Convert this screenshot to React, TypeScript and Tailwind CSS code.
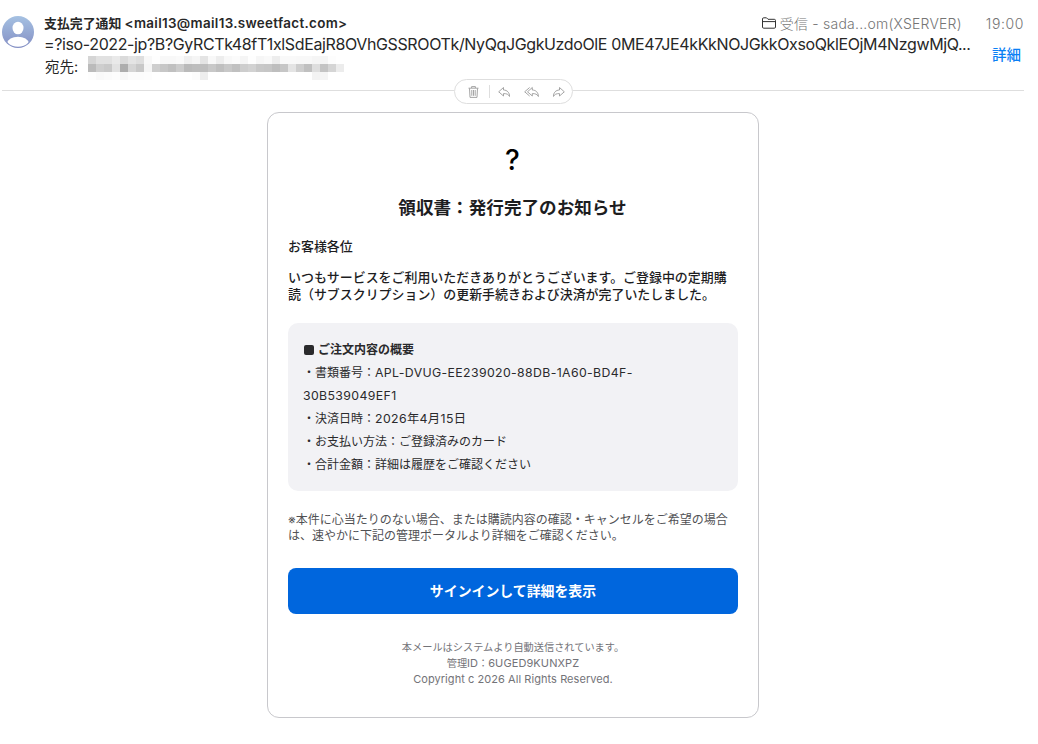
import React from 'react';

const ui = "font-[Inter,'Noto_Sans_CJK_JP',sans-serif]";

// 8px mosaic over the recipient, one grey level per tile
const mosaic = [
  [213, 225, 225, 233, 218, 228, 222, 248, 254, 248, 248, 250, 240, 245, 228, 248, 237, 248, 251, 245, 254, 246, 249, 237, 249, 249, 248, 248, 245, 245, 253, 255],
  [187, 206, 201, 226, 173, 213, 200, 245, 206, 199, 192, 204, 186, 189, 190, 200, 191, 200, 192, 205, 210, 200, 198, 190, 198, 228, 206, 192, 222, 196, 213, 236],
  [253, 249, 251, 253, 248, 252, 252, 253, 255, 255, 255, 255, 255, 252, 238, 255, 255, 255, 255, 255, 255, 255, 255, 255, 255, 255, 255, 255, 243, 245, 255, 255],
];

const Avatar = () => (
  <svg className="w-8 h-8 shrink-0" viewBox="0 0 32 32">
    <defs>
      <linearGradient id="avatar" x1="0" y1="0" x2="0" y2="1">
        <stop offset="0" stopColor="#a5c1e2" />
        <stop offset="1" stopColor="#848fc4" />
      </linearGradient>
      <clipPath id="avatarClip"><circle cx="16" cy="16" r="14.8" /></clipPath>
    </defs>
    <circle cx="16" cy="16" r="16" fill="url(#avatar)" />
    <g fill="#fff" clipPath="url(#avatarClip)">
      <ellipse cx="16" cy="12" rx="5.5" ry="6.3" />
      <ellipse cx="16" cy="27" rx="10.5" ry="6.2" />
    </g>
  </svg>
);

const replyPath = 'M5.5 1.5 L0.7 5.8 L5.5 10 V7.6 C8.6 7.5 10.3 8.2 11.6 10.5 C11.5 6.6 9.3 4.1 5.5 4 Z';

const Toolbar = () => (
  <div className="w-[119px] h-[25px] rounded-full border border-[#dedede] bg-white flex items-center text-[#9b9b9b]">
    <svg className="w-[11px] h-3 ml-[13px]" viewBox="0 0 11 12" fill="none" stroke="currentColor" strokeWidth="0.9">
      <path d="M0.5 2.2H10.5M3.6 2V0.6H7.4V2M1.5 2.4L2 11.4H9L9.5 2.4M3.8 4V9.8M5.5 4V9.8M7.2 4V9.8" />
    </svg>
    <span className="w-px h-[13px] bg-[#dedede] ml-[10px]" />
    <svg className="w-3 h-3 ml-2" viewBox="0 0 12 12" fill="none" stroke="currentColor" strokeWidth="0.9" strokeLinejoin="round">
      <path d={replyPath} />
    </svg>
    <svg className="w-[15px] h-3 ml-[14px]" viewBox="0 0 15 12" fill="none" stroke="currentColor" strokeWidth="0.9" strokeLinejoin="round">
      <path d="M5.6 1.5L0.7 5.8L5.6 10" />
      <path d={replyPath} transform="translate(2.8 0)" />
    </svg>
    <svg className="w-3 h-3 ml-[14px] -scale-x-100" viewBox="0 0 12 12" fill="none" stroke="currentColor" strokeWidth="0.9" strokeLinejoin="round">
      <path d={replyPath} />
    </svg>
  </div>
);

const MailHeader = () => (
  <header className="h-[79px] pl-[2px] pr-[15px] pt-[13px] flex text-[#272727]">
    <div className="pt-[3px]"><Avatar /></div>
    <div className="ml-[10px] flex-1 min-w-0">
      <div className="h-5 flex items-center justify-between whitespace-nowrap">
        <span className="text-[12.9px] font-semibold">
          支払完了通知 <span className="text-[13.4px] tracking-[0.33px]">&lt;mail13@mail13.sweetfact.com&gt;</span>
        </span>
        <span className="flex items-center text-[14px] font-light text-[#757575]">
          <svg className="w-[14px] h-3 mr-1" viewBox="0 0 14 12" fill="none" stroke="#333" strokeWidth="1">
            <path d="M0.5 10V2Q0.5 0.8 1.7 0.8H4.5L6 2.3H12.3Q13.5 2.3 13.5 3.5V10Q13.5 11.2 12.3 11.2H1.7Q0.5 11.2 0.5 10ZM0.5 4.6H13.5" />
          </svg>
          <span className="tracking-[0.22px]">受信 - sada...om(XSERVER)</span>
          <span className="ml-6 tracking-[0.6px] -mr-px">19:00</span>
        </span>
      </div>
      <div className="h-[22px] flex items-center justify-between whitespace-nowrap">
        <span className="text-[16px] tracking-[-0.375px]">=?iso-2022-jp?B?GyRCTk48fT1xlSdEajR8OVhGSSROOTk/NyQqJGgkUzdoOlE 0ME47JE4kKkNOJGkkOxsoQklEOjM4NzgwMjQ...</span>
        <span className="text-[14.5px] font-medium text-[#0a7ff5] pt-[22px] mr-[2px]">詳細</span>
      </div>
      <div className="h-6 flex items-center text-[14.5px]">
        <span className="w-[44px] pl-px pb-px">宛先:</span>
        <div className="grid grid-cols-[repeat(32,8px)] grid-rows-[repeat(3,8px)] mt-[2px]">
          {mosaic.flat().map((g, i) => (
            <span key={i} style={{ background: `rgb(${g},${g},${g})` }} />
          ))}
        </div>
      </div>
    </div>
  </header>
);

const details = [
  { label: '・書類番号：', value: 'APL-DVUG-EE239020-88DB-1A60-BD4F-' },
  { label: '', value: '30B539049EF1' },
  { label: '・決済日時：', value: '2026年4月15日' },
  { label: '・お支払い方法：ご登録済みのカード', value: '' },
  { label: '・合計金額：詳細は履歴をご確認ください', value: '' },
];

const Receipt = () => (
  <main className="ml-[267px] mt-2 w-[492px] h-[606px] rounded-[12px] border border-[#c8c8cc] px-5 flex flex-col whitespace-nowrap text-[#1d1d1f]">
    <div className="mt-[30px] h-[34px] leading-[34px] text-center text-[28px] font-medium text-black pr-px">?</div>
    <h1 className="mt-[18px] h-[26px] leading-[26px] text-center text-[17.6px] font-bold pr-px">領収書：発行完了のお知らせ</h1>
    <p className="mt-[17px] h-[17px] leading-[17px] text-[12.95px] font-medium">お客様各位</p>
    <p className="mt-[14px] leading-[17px] text-[12.95px] font-medium">
      いつもサービスをご利用いただきありがとうございます。ご登録中の定期購<br />
      読（サブスクリプション）の更新手続きおよび決済が完了いたしました。
    </p>

    <section className="mt-5 h-[168px] rounded-[10px] bg-[#f2f2f5] pl-[15px] pt-[15px] text-[12px] leading-[23px] text-[#2a2a2c]">
      <div className="flex items-center font-bold">
        <span className="w-[10px] h-[10px] rounded-[2px] bg-[#2a2a2c] ml-px mr-1" />
        ご注文内容の概要
      </div>
      {details.map(d => (
        <div key={d.label + d.value}>
          {d.label}<span className="text-[12.3px] tracking-[0.37px]">{d.value}</span>
        </div>
      ))}
    </section>

    <p className="mt-[21px] leading-4 text-[12px] text-[#515154]">
      ※本件に心当たりのない場合、または購読内容の確認・キャンセルをご希望の場合<br />
      は、速やかに下記の管理ポータルより詳細をご確認ください。
    </p>

    <button className="mt-6 h-[46px] pt-px rounded-lg bg-[#0066dd] text-white text-[13.9px] font-bold">サインインして詳細を表示</button>

    <footer className="mt-[25px] text-center text-[10.2px] leading-4 text-[#737378]">
      <div>本メールはシステムより自動送信されています。</div>
      <div>管理<span className="text-[11px]">ID</span>：<span className="text-[11px] tracking-[0.1px]">6UGED9KUNXPZ</span></div>
      <div className="text-[11px] tracking-[0.06px]">Copyright c 2026 All Rights Reserved.</div>
    </footer>
  </main>
);

export default function App() {
  return (
    <div className={`w-[1038px] h-[744px] bg-white overflow-hidden ${ui}`} lang="ja">
      <MailHeader />
      <div className="flex items-center pl-[2px] pr-[14px]">
        <span className="w-[452px] h-px bg-[#dedede] mb-[2px]" />
        <Toolbar />
        <span className="flex-1 h-px bg-[#dedede] mb-[2px]" />
      </div>
      <Receipt />
    </div>
  );
}
